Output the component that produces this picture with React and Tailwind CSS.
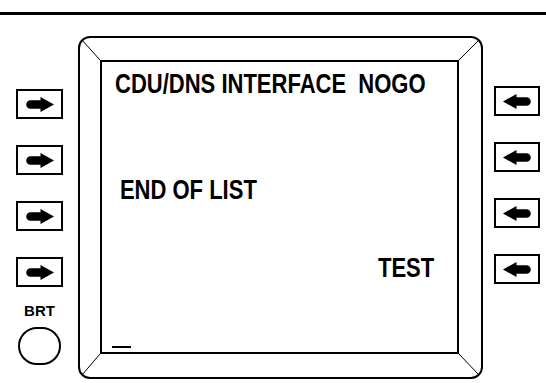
import React from "react";

function Arrow({ dir }) {
  return (
    <svg width="28" height="15" viewBox="0 0 28 15" className={dir === "left" ? "-scale-x-100" : ""}>
      <path d="M4.5 3.2 H14.5 V0 L28 7.5 L14.5 15 V11.8 H4.5 A4.3 4.3 0 0 1 4.5 3.2 Z" fill="black" />
    </svg>
  );
}

function KeyBtn({ dir, w }) {
  return (
    <div className={`${w} h-[30px] border-2 border-black flex items-center justify-center bg-white`}>
      <Arrow dir={dir} />
    </div>
  );
}

export default function App() {
  return (
    <div className="w-[546px] h-[383px] bg-white overflow-hidden font-['Liberation_Sans',Arial,sans-serif] text-black">
      <div className="pt-[12px]">
        <div className="h-[3px] bg-black" />
      </div>
      <div className="flex mt-[21px]">
        <div className="ml-[16px] w-[47px] flex flex-col items-center pt-[53px]">
          <div className="flex flex-col gap-[26px]">
            <KeyBtn dir="right" w="w-[47px]" />
            <KeyBtn dir="right" w="w-[47px]" />
            <KeyBtn dir="right" w="w-[47px]" />
            <KeyBtn dir="right" w="w-[47px]" />
          </div>
          <div className="mt-[16px] text-[15px] leading-none font-bold">BRT</div>
          <div className="mt-[9px] w-[43px] h-[38px] rounded-full border-2 border-black" />
        </div>

        <div className="ml-[15px] relative w-[405px] h-[343px] border-2 border-black rounded-[12px] pl-[20px] pt-[22px] pr-[22px] pb-[23px]">
          <svg className="absolute -inset-[2px] pointer-events-none" width="405" height="343" viewBox="0 0 405 343">
            <line x1="4" y1="4" x2="22" y2="24" stroke="black" strokeWidth="1" />
            <line x1="401" y1="4" x2="381" y2="24" stroke="black" strokeWidth="1" />
            <line x1="4" y1="339" x2="22" y2="318" stroke="black" strokeWidth="1" />
            <line x1="401" y1="339" x2="381" y2="318" stroke="black" strokeWidth="1" />
          </svg>
          <div className="h-full border-2 border-black flex flex-col">
            <div className="mt-[9px] pl-[16px] text-[27px] leading-none font-bold whitespace-pre origin-left scale-x-[0.815]">
              CDU/DNS INTERFACE  NOGO
            </div>
            <div className="mt-[79px] pl-[22px] text-[27px] leading-none font-bold whitespace-pre origin-left scale-x-[0.815]">
              END OF LIST
            </div>
            <div className="mt-[51px] pr-[28px] text-[27px] leading-none font-bold whitespace-pre self-end origin-right scale-x-[0.815]">
              TEST
            </div>
            <div className="mt-auto mb-[4px] ml-[10px] w-[19px] h-[2px] bg-black" />
          </div>
        </div>

        <div className="ml-[11px] w-[46px] flex flex-col pt-[50px] gap-[26px]">
          <KeyBtn dir="left" w="w-[46px]" />
          <KeyBtn dir="left" w="w-[46px]" />
          <KeyBtn dir="left" w="w-[46px]" />
          <KeyBtn dir="left" w="w-[46px]" />
        </div>
      </div>
    </div>
  );
}
